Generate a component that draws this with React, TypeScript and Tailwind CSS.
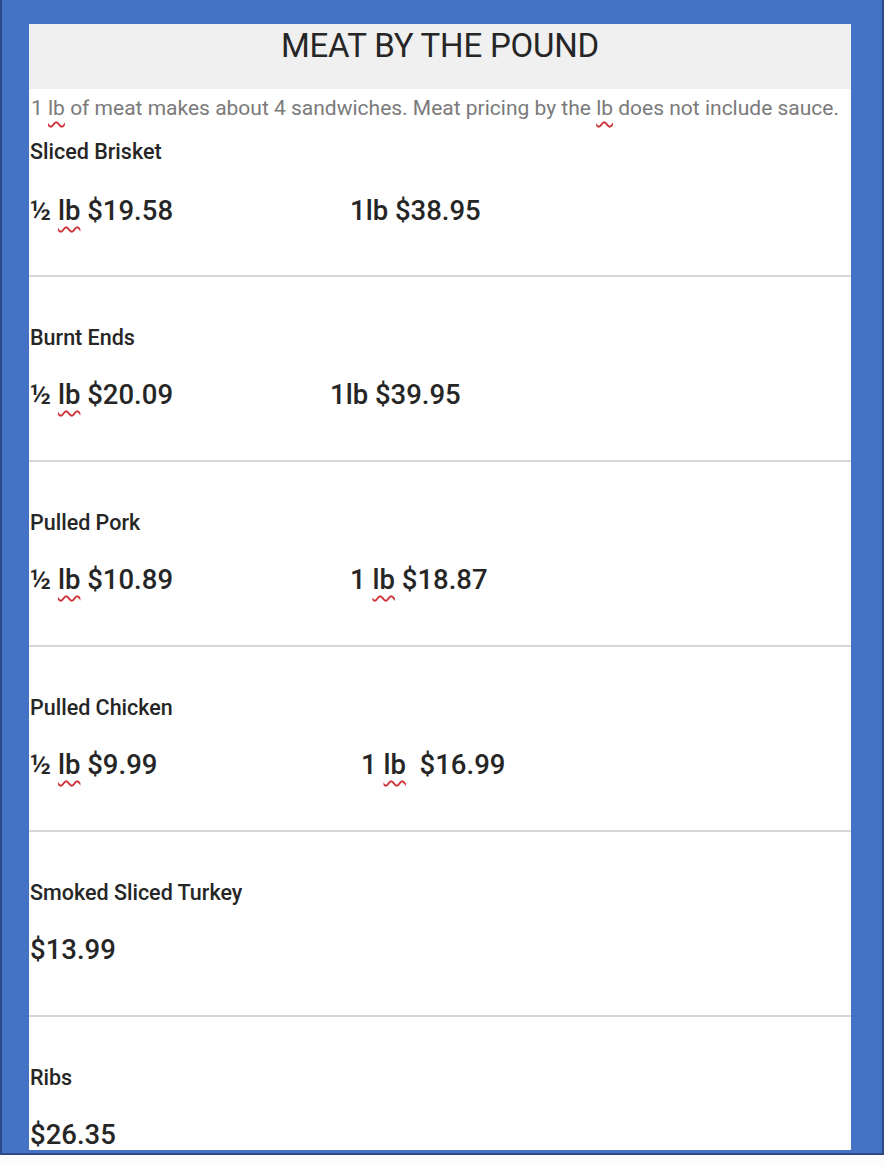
const items = [
  { name: "Sliced Brisket", half: true, halfPrice: "$19.58", oneLabel: "1lb", onePrice: "$38.95", col: "w-[320px]", first: true },
  { name: "Burnt Ends", half: true, halfPrice: "$20.09", oneLabel: "1lb", onePrice: "$39.95", col: "w-[300px]" },
  { name: "Pulled Pork", half: true, halfPrice: "$10.89", oneLabel: "1 lb", onePrice: "$18.87", col: "w-[320px]" },
  { name: "Pulled Chicken", half: true, halfPrice: "$9.99", oneLabel: "1 lb ", onePrice: "$16.99", col: "w-[331px]" },
  { name: "Smoked Sliced Turkey", half: false, single: "$13.99" },
  { name: "Ribs", half: false, single: "$26.35", last: true },
];

function Lb() {
  return (
    <span className="underline decoration-wavy decoration-[#d0343a] decoration-[1.5px] underline-offset-[6px]">
      lb
    </span>
  );
}

function OneLabel({ label }: { label: string }) {
  if (label === "1lb") return <>1lb </>;
  return (
    <>
      1 <Lb />
      {label.endsWith(" ") ? "\u00a0 " : " "}
    </>
  );
}

export default function App() {
  return (
    <div className="min-h-[1166px] bg-[#fcfcfc] font-['Roboto',sans-serif]">
      <div className="w-[884px] h-[1155px] bg-[#4472c4] border-l-2 border-r-2 border-b-2 border-[#2c4a85] pt-[24px] pl-[27px]">
        <div className="w-[822px] h-[1126px] bg-white overflow-hidden">
          <div className="h-[65px] bg-[#f0f0f0] flex justify-center pt-[2px]">
            <h1 className="text-[33px] leading-[40px] text-[#262626] tracking-[-0.2px]">MEAT BY THE POUND</h1>
          </div>
          <p className="mt-[6px] pl-[2px] text-[21px] leading-[26px] text-[#7a7a7a] whitespace-nowrap">
            1 <Lb /> of meat makes about 4 sandwiches. Meat pricing by the <Lb /> does not include sauce.
          </p>
          {items.map((it) => (
            <div
              key={it.name}
              className={
                (it.first ? "pt-[19px] " : "pt-[49px] ") +
                (it.last ? "" : it.first ? "pb-[48px] border-b-2 border-[#d6d6d6] " : "pb-[49px] border-b-2 border-[#d6d6d6] ") +
                "pl-[1px] text-[#262626]"
              }
            >
              <div className="text-[21.5px] leading-[24px] font-medium">{it.name}</div>
              <div
                className={
                  (it.first ? "mt-[31px] " : "mt-[29px] ") + "flex text-[27.5px] leading-[32px] font-medium"
                }
              >
                {it.half ? (
                  <>
                    <span className={it.col}>
                      ½ <Lb /> {it.halfPrice}
                    </span>
                    <span>
                      <OneLabel label={it.oneLabel!} />
                      {it.onePrice}
                    </span>
                  </>
                ) : (
                  <span>{it.single}</span>
                )}
              </div>
            </div>
          ))}
        </div>
      </div>
    </div>
  );
}
